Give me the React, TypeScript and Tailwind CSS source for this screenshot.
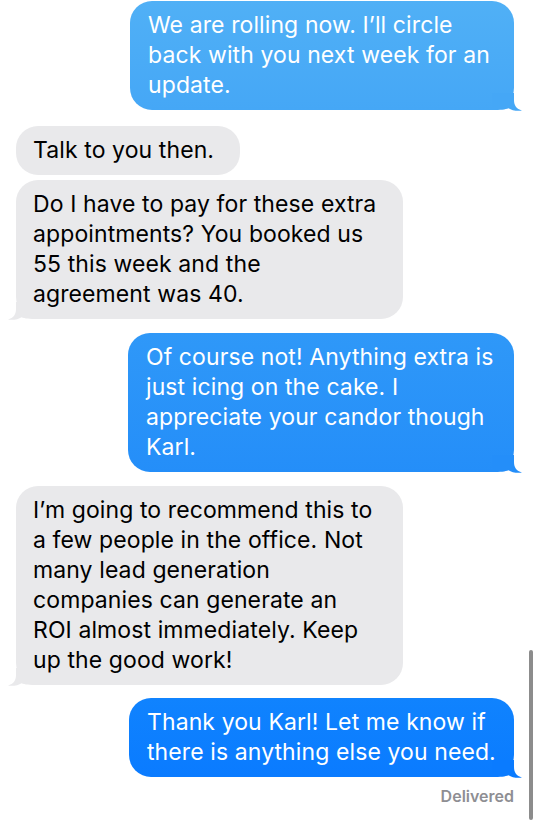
type Side = "left" | "right";

interface BubbleProps {
  side: Side;
  lines: string[];
  width: string;
  tail?: boolean;
  bg: string;
  tailColor: string;
  className?: string;
}

function Tail({ side, color }: { side: Side; color: string }) {
  return (
    <svg
      viewBox="0 0 30 18"
      className={`absolute bottom-[-1px] w-[30px] h-[18px] ${
        side === "right" ? "right-[-8px]" : "left-[-8px] -scale-x-100"
      }`}
    >
      <path
        d="M0 0 H22 V7 C22 12.5 24.5 15.8 30 17.6 C24.5 18.3 19.5 17.2 16.5 15.2 C13 16.6 9 17 0 17 Z"
        fill={color}
      />
    </svg>
  );
}

function Bubble({ side, lines, width, tail = true, bg, tailColor, className = "" }: BubbleProps) {
  const isMe = side === "right";
  return (
    <div
      className={`relative ${width} ${bg} rounded-[22px] pt-[9px] pb-[10px] ${
        isMe ? "self-end mr-[22px] pl-[18px] text-white" : "self-start ml-[16px] pl-[17px] text-black"
      } ${className}`}
    >
      {tail && <Tail side={side} color={tailColor} />}
      <p className="relative text-[23px] leading-[30px] tracking-[0.1px] whitespace-nowrap">
        {lines.map((l, i) => (
          <span key={i} className="block">
            {l}
          </span>
        ))}
      </p>
    </div>
  );
}

export default function App() {
  return (
    <div className="relative w-[536px] h-[829px] overflow-hidden bg-white font-['Inter','Noto_Sans',sans-serif]">
      <div className="flex flex-col pt-[1px]">
        <Bubble
          side="right"
          width="w-[384px]"
          bg="bg-gradient-to-b from-[#50b0f6] to-[#45a7f6]"
          tailColor="#45a7f6"
          lines={["We are rolling now. I’ll circle", "back with you next week for an", "update."]}
        />
        <Bubble
          side="left"
          width="w-[224px]"
          tail={false}
          bg="bg-[#e9e9eb]"
          tailColor="#e9e9eb"
          className="mt-[16px]"
          lines={["Talk to you then."]}
        />
        <Bubble
          side="left"
          width="w-[387px]"
          bg="bg-[#e9e9eb]"
          tailColor="#e9e9eb"
          className="mt-[5px]"
          lines={[
            "Do I have to pay for these extra",
            "appointments? You booked us",
            "55 this week and the",
            "agreement was 40.",
          ]}
        />
        <Bubble
          side="right"
          width="w-[386px]"
          bg="bg-gradient-to-b from-[#2f98f8] to-[#248ef9]"
          tailColor="#248ef9"
          className="mt-[14px]"
          lines={[
            "Of course not! Anything extra is",
            "just icing on the cake. I",
            "appreciate your candor though",
            "Karl.",
          ]}
        />
        <Bubble
          side="left"
          width="w-[387px]"
          bg="bg-[#e9e9eb]"
          tailColor="#e9e9eb"
          className="mt-[14px]"
          lines={[
            "I’m going to recommend this to",
            "a few people in the office. Not",
            "many lead generation",
            "companies can generate an",
            "ROI almost immediately. Keep",
            "up the good work!",
          ]}
        />
        <Bubble
          side="right"
          width="w-[385px]"
          bg="bg-gradient-to-b from-[#1083fe] to-[#0a7bff]"
          tailColor="#0a7bff"
          className="mt-[13px]"
          lines={["Thank you Karl! Let me know if", "there is anything else you need."]}
        />
        <p className="self-end mr-[22px] mt-[10px] text-[16px] leading-[19px] font-semibold text-[#8e8e93]">
          Delivered
        </p>
      </div>

      {/* scroll indicator */}
      <div className="absolute left-[529px] top-[650px] w-[4px] h-[170px] rounded-full bg-[#8c8c8c]" />
    </div>
  );
}
